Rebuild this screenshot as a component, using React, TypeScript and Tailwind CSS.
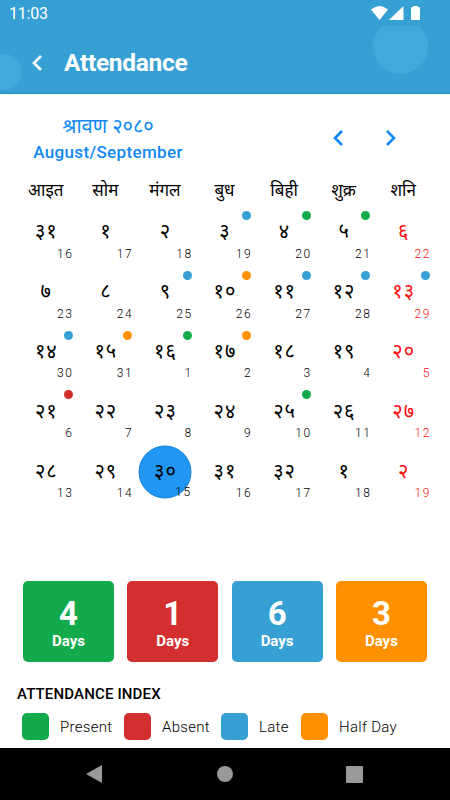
import React from 'react';

const GREEN = 'bg-[#13aa4b]';
const RED = 'bg-[#d32f2f]';
const BLUE = 'bg-[#369fd3]';
const ORANGE = 'bg-[#ff9100]';

const weekdays = ['आइत', 'सोम', 'मंगल', 'बुध', 'बिही', 'शुक्र', 'शनि'];

type Day = { np: string; en: number; dot?: string; selected?: boolean };

const weeks: Day[][] = [
  [
    { np: '३१', en: 16 }, { np: '१', en: 17 }, { np: '२', en: 18 }, { np: '३', en: 19, dot: BLUE },
    { np: '४', en: 20, dot: GREEN }, { np: '५', en: 21, dot: GREEN }, { np: '६', en: 22 },
  ],
  [
    { np: '७', en: 23 }, { np: '८', en: 24 }, { np: '९', en: 25, dot: BLUE }, { np: '१०', en: 26, dot: ORANGE },
    { np: '११', en: 27, dot: BLUE }, { np: '१२', en: 28, dot: BLUE }, { np: '१३', en: 29, dot: BLUE },
  ],
  [
    { np: '१४', en: 30, dot: BLUE }, { np: '१५', en: 31, dot: ORANGE }, { np: '१६', en: 1, dot: GREEN },
    { np: '१७', en: 2, dot: ORANGE }, { np: '१८', en: 3 }, { np: '१९', en: 4 }, { np: '२०', en: 5 },
  ],
  [
    { np: '२१', en: 6, dot: RED }, { np: '२२', en: 7 }, { np: '२३', en: 8 }, { np: '२४', en: 9 },
    { np: '२५', en: 10, dot: GREEN }, { np: '२६', en: 11 }, { np: '२७', en: 12 },
  ],
  [
    { np: '२८', en: 13 }, { np: '२९', en: 14 }, { np: '३०', en: 15, selected: true }, { np: '३१', en: 16 },
    { np: '३२', en: 17 }, { np: '१', en: 18 }, { np: '२', en: 19 },
  ],
];

const totals = [
  { count: 4, color: GREEN },
  { count: 1, color: RED },
  { count: 6, color: BLUE },
  { count: 3, color: ORANGE },
];

const legend = [
  { label: 'Present', color: GREEN, width: 'w-[102px]' },
  { label: 'Absent', color: RED, width: 'w-[97px]' },
  { label: 'Late', color: BLUE, width: 'w-[80px]' },
  { label: 'Half Day', color: ORANGE, width: 'w-[110px]' },
];

function Chevron({ right = false, className = '' }: { right?: boolean; className?: string }) {
  return (
    <svg viewBox="0 0 10 16" className={className} fill="none" stroke="currentColor" strokeWidth="2.6">
      <path d={right ? 'M1 1L8 8L1 15' : 'M9 1L2 8L9 15'} />
    </svg>
  );
}

function Header() {
  return (
    <header className="relative h-[94px] overflow-hidden border-b border-[#1b8fc9] bg-[#369fd3] text-white">
      <div className="absolute -left-[14px] top-[54px] size-9 rounded-full bg-[#41aadd]" />
      <div className="absolute right-0 top-[26px] h-[60px] w-[80px] overflow-hidden">
        <div className="absolute -top-[7px] left-[3px] size-[55px] rounded-full bg-[#41aadd]" />
      </div>
      <div className="relative flex h-[26px] items-center pl-[9px] pr-[30px] pt-[2px]">
        <span className="text-[16px] leading-none tracking-[-0.2px]">11:03</span>
        <svg className="ml-auto h-4 w-[50px]" viewBox="370 6 50 16" fill="currentColor">
          <path d="M371 9.5Q379.5 2.5 388 9.5L379.5 20Z" />
          <path d="M389 20L403.500 6V20Z" />
          <path d="M413 6h5v1.300h2V20h-9V7.300h2Z" />
        </svg>
      </div>
      <div className="relative flex h-[74px] items-center pl-8">
        <Chevron className="h-4 w-[10px]" />
        <h1 className="ml-[22px] text-[24.5px] font-bold leading-none tracking-[-0.3px]">Attendance</h1>
      </div>
    </header>
  );
}

function DayCell({ day, holiday }: { day: Day; holiday: boolean }) {
  return (
    <div className={`relative flex items-center justify-center ${holiday ? 'text-[#ff0f0f]' : 'text-black'}`}>
      {day.selected && (
        <span className="absolute left-1/2 top-1/2 size-[53px] -translate-x-1/2 -translate-y-1/2 rounded-full border border-[#137fdc] bg-[#2196f3]" />
      )}
      {day.dot && <span className={`absolute right-[3px] top-[8px] size-[9px] rounded-full ${day.dot}`} />}
      <span className="relative -mt-[3px] ml-px text-[20px] leading-none tracking-[1px]">{day.np}</span>
      <span
        className={`absolute text-[12px] font-light leading-none tracking-[1.6px] ${
          day.selected ? 'bottom-[4px] right-[3px]' : 'bottom-[3px] right-[2px]'
        }`}
      >
        {day.en}
      </span>
    </div>
  );
}

export default function App() {
  return (
    <div className="flex h-[800px] w-[450px] flex-col overflow-hidden bg-white font-[Roboto,'Noto_Sans','Noto_Sans_Devanagari',sans-serif]">
      <Header />
      <section className="flex h-[84px] text-[#1089f5]">
        <div className="ml-[8px] flex w-[200px] flex-col items-center pt-[20px]">
          <span className="text-[20px] leading-[24px]">श्रावण २०८०</span>
          <span className="mt-[2px] text-[17px] font-medium leading-[24px] tracking-[0.35px]">August/September</span>
        </div>
        <div className="ml-[125px] flex gap-[43px] pt-[36px]">
          <Chevron className="h-4 w-[10px]" />
          <Chevron right className="h-4 w-[10px]" />
        </div>
      </section>
      <div className="ml-4 grid h-[25px] w-[417px] grid-cols-7 items-center justify-items-center text-[17px] leading-none">
        {weekdays.map((name) => <span key={name}>{name}</span>)}
      </div>
      <div className="ml-[16px] grid h-[299px] w-[417px] grid-cols-7 grid-rows-5">
        {weeks.map((week) => week.map((day, i) => (
          <DayCell key={`${day.np}-${day.en}`} day={day} holiday={i === 6} />
        )))}
      </div>
      <section className="mt-[79px] flex gap-[13.300px] pl-[23px] text-white">
        {totals.map(({ count, color }) => (
          <div key={color} className={`flex h-[81px] w-[91px] flex-col items-center rounded-[5px] pt-[15px] ${color}`}>
            <span className="text-[33px] font-bold leading-[36px]">{count}</span>
            <span className="text-[15px] font-bold leading-[18px]">Days</span>
          </div>
        ))}
      </section>
      <section className="h-[86px] pt-[23px]">
        <h2 className="pl-[17px] text-[15px] font-medium leading-[18px] tracking-[0.15px]">ATTENDANCE INDEX</h2>
        <div className="mt-[10px] flex pl-[22px]">
          {legend.map(({ label, color, width }) => (
            <div key={label} className={`flex items-center ${width}`}>
              <span className={`size-[27px] shrink-0 rounded-[5px] ${color}`} />
              <span className="ml-[11px] whitespace-nowrap pt-px text-[15px] font-light leading-none tracking-[0.3px]">{label}</span>
            </div>
          ))}
        </div>
      </section>
      <nav className="flex h-[52px] shrink-0 items-center bg-black pl-[86px] text-[#999]">
        <svg className="h-[18px] w-4" viewBox="0 0 16 18" fill="currentColor"><path d="M0 9L16 0V18Z" /></svg>
        <span className="ml-[115px] size-4 rounded-full bg-[#999]" />
        <span className="ml-[113px] size-[17px] rounded-[1px] bg-[#999]" />
      </nav>
    </div>
  );
}
